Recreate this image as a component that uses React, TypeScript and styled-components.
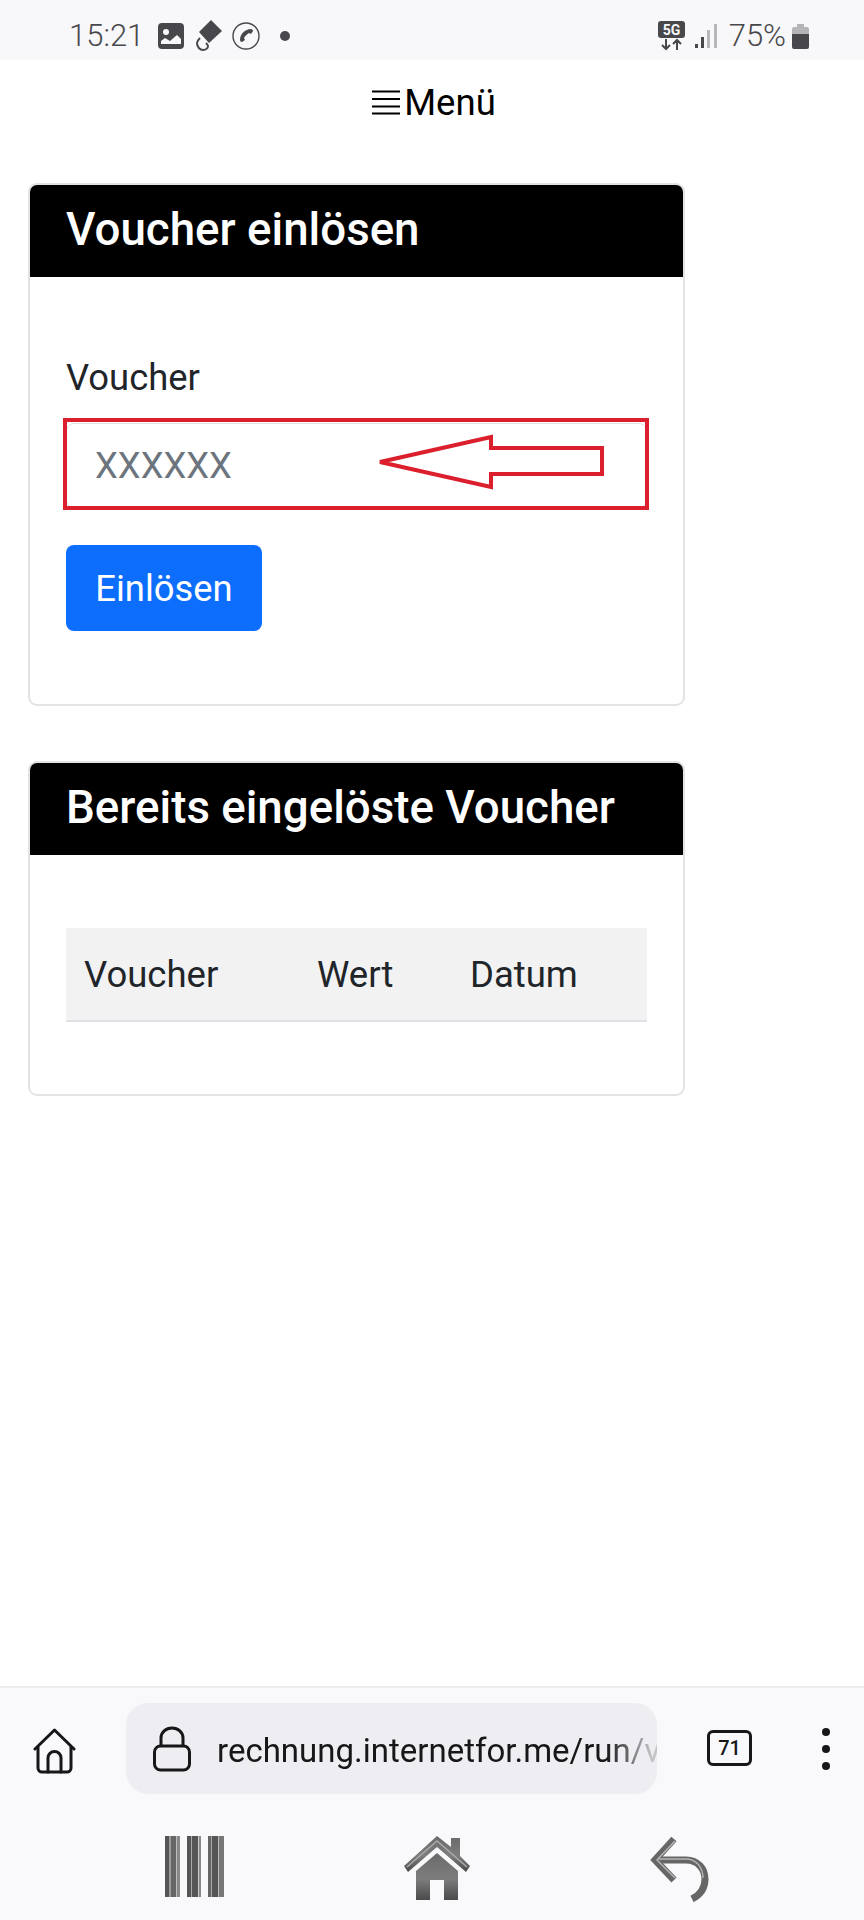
import React from 'react'
import styled, { createGlobalStyle } from 'styled-components'

const Global = createGlobalStyle`
  html, body { margin: 0; padding: 0; background: #fff; }
  body { font-family: Roboto, "Liberation Sans", sans-serif; color: #212529; }
  * { box-sizing: border-box; }
`

const Page = styled.div`
  width: 864px;
  height: 1920px;
  display: flex;
  flex-direction: column;
  overflow: hidden;
`

const StatusBar = styled.div`
  height: 60px;
  flex: none;
  background: #f8f8fa;
  display: flex;
  align-items: center;
  padding: 12px 55px 0 69px;
  color: #48484c;
`

const Time = styled.span`
  font-size: 31px;
  font-weight: 300;
  width: 89px;
  margin-top: -2px;
`

const StatusIcon = styled.svg<{ $gap?: number }>`
  display: block;
  flex: none;
  margin-right: ${(p) => p.$gap ?? 0}px;
`

const StatusSpacer = styled.div`
  flex: 1;
`

const Percent = styled.span`
  font-size: 31px;
  font-weight: 300;
  margin: -2px 6px 0 0;
`

const Main = styled.main`
  flex: 1;
  padding: 0 0 0 28px;
`

const MenuRow = styled.div`
  height: 123px;
  width: 816px;
  margin-left: -28px;
  padding: 0 0 39px 0;
  display: flex;
  align-items: center;
  justify-content: center;
  font-size: 36.500px;
  color: #000;
  position: relative;
  left: 26px;
`

const MenuLabel = styled.span`
  margin-left: 4px;
`

const Card = styled.section`
  width: 657px;
  border: 2px solid #e3e3e5;
  border-radius: 9px;
  overflow: hidden;
  margin-bottom: 55px;
  background: #fff;
`

const CardHeader = styled.h2`
  margin: -2px -2px 0;
  height: 94px;
  background: #000;
  color: #fff;
  font-size: 45.700px;
  font-weight: 500;
  line-height: 93px;
  padding-left: 38px;
`

const CardBody = styled.div<{ $pad: string }>`
  padding: ${(p) => p.$pad};
`

const Label = styled.label`
  display: block;
  font-size: 36.400px;
  line-height: 54px;
  margin-bottom: 18px;
`

const Field = styled.div`
  position: relative;
  width: 581px;
  height: 85px;
`

const Input = styled.input`
  width: 100%;
  height: 100%;
  border: 1px solid #dee2e6;
  border-radius: 8px;
  padding: 0 28px;
  font: 400 36.400px Roboto, sans-serif;
  &::placeholder { color: #6c757d; opacity: 1; }
`

const RedFrame = styled.div`
  position: absolute;
  left: -3px;
  top: -5px;
  width: 586px;
  height: 92px;
  border: 4px solid #dc1f2c;
  pointer-events: none;
`

const Arrow = styled.svg`
  position: absolute;
  left: 0;
  top: 0;
  pointer-events: none;
`

const Button = styled.button`
  display: block;
  margin-top: 37px;
  width: 196px;
  height: 86px;
  border: 0;
  border-radius: 8px;
  background: #0d6efd;
  color: #fff;
  font: 400 36.400px Roboto, sans-serif;
`

const Table = styled.table`
  width: 581px;
  border-collapse: collapse;
  table-layout: fixed;
`

const Th = styled.th<{ $w: number }>`
  width: ${(p) => p.$w}px;
  height: 93px;
  background: #f2f2f3;
  border-bottom: 2px solid #dee2e6;
  padding: 0 0 0 18px;
  text-align: left;
  font-size: 36.500px;
  font-weight: 400;
`

const Toolbar = styled.div`
  height: 124px;
  flex: none;
  background: #f9f9fb;
  border-top: 2px solid #ececee;
  padding: 15px 0 0 33px;
  display: flex;
  align-items: flex-start;
`

const HomeIcon = styled.svg`
  flex: none;
  margin-top: 25px;
`

const UrlPill = styled.div`
  width: 531px;
  height: 91px;
  margin: 0 50px;
  flex: none;
  background: #eeeef2;
  border-radius: 22px;
  display: flex;
  align-items: center;
  padding-left: 27px;
  gap: 26px;
  overflow: hidden;
`

const LockIcon = styled.svg`
  flex: none;
`

const UrlText = styled.span`
  flex: none;
  font-size: 33px;
  color: #17171a;
  white-space: nowrap;
  margin-top: 3px;
  -webkit-mask-image: linear-gradient(to right, #000 88%, rgba(0, 0, 0, 0.2) 98%);
  mask-image: linear-gradient(to right, #000 88%, rgba(0, 0, 0, 0.2) 98%);
`

const TabCount = styled.div`
  width: 45px;
  height: 36px;
  margin-top: 27px;
  border: 3px solid #17171a;
  border-radius: 6px;
  display: flex;
  align-items: center;
  justify-content: center;
  font-size: 20px;
  font-weight: 500;
  color: #17171a;
`

const Dots = styled.div`
  display: flex;
  flex-direction: column;
  gap: 9px;
  margin: 25px 0 0 70px;
`

const Dot = styled.span`
  width: 8px;
  height: 8px;
  border-radius: 50%;
  background: #17171a;
`

const NavBar = styled.div`
  height: 110px;
  flex: none;
  background: #f9f9fb;
  display: flex;
  align-items: flex-start;
  gap: 180px;
  padding: 26px 0 0 165px;
`

const bars: [number, number, string][] = [
  [0, 4, '#555'], [4, 2, '#999'], [6, 5, '#666'], [11, 1, '#bbb'], [12, 3, '#888'],
  [22, 4, '#555'], [26, 1, '#aaa'], [27, 6, '#555'], [33, 1, '#ccc'], [34, 2, '#888'],
  [43, 3, '#666'], [46, 1, '#aaa'], [47, 6, '#555'], [53, 1, '#bbb'], [54, 5, '#777'],
]

const Barcode = () => (
  <svg width="59" height="61" viewBox="0 0 59 61">
    {bars.map(([x, w, c]) => (
      <rect key={x} x={x} y="0" width={w} height="61" fill={c} />
    ))}
  </svg>
)

const NavHome = () => (
  <svg width="66" height="66" viewBox="0 0 66 66">
    <defs>
      <linearGradient id="homeFill" x1="0" y1="0" x2="0" y2="1">
        <stop offset="0" stopColor="#6a6a6a" />
        <stop offset="0.55" stopColor="#7d7d7d" />
        <stop offset="1" stopColor="#4a4a4a" />
      </linearGradient>
    </defs>
    <path d="M33 0 47 11V2h9v18l10 10-4 6L33 11 4 36l-4-6z" fill="url(#homeFill)" />
    <path d="M3 31 33 5 63 31" fill="none" stroke="#aaa" strokeWidth="1.500" />
    <path d="M33 17 54 35v29H40V44H26v20H12V35z" fill="url(#homeFill)" />
  </svg>
)

const NavBack = () => (
  <svg width="59" height="66" viewBox="0 0 59 66" fill="none">
    <path d="M24 3 5 24l19 20" stroke="#666" strokeWidth="7" />
    <path d="M6 24h30c12 0 19 9 19 19 0 9-5 16-13 20" stroke="#666" strokeWidth="7" />
    <path d="M25 5 7 24l18 18M9 23h27c10 0 17 8 17 19" stroke="#b5b5b5" strokeWidth="1.500" />
  </svg>
)

function App() {
  return (
    <Page>
      <Global />
      <StatusBar>
        <Time>15:21</Time>
        <StatusIcon $gap={11} width="26" height="26" viewBox="0 0 26 26">
          <rect width="26" height="26" rx="4" fill="#48484c" />
          <circle cx="8" cy="9" r="3" fill="#f8f8fa" />
          <path d="M3 21v-3l4-3 5 3 7-6 4 4v5z" fill="#f8f8fa" />
        </StatusIcon>
        <StatusIcon $gap={10} width="27" height="32" viewBox="0 0 27 32" fill="none">
          <path d="M16 0 27 11 14 23 4 12z" fill="#48484c" />
          <path d="M5 18c-2 2-3 3-3 5 0 4 3 7 6 7 3 0 5-2 5-4 0-1-1-2-2-3" stroke="#48484c" strokeWidth="2" />
        </StatusIcon>
        <StatusIcon $gap={20} width="28" height="28" viewBox="0 0 28 28" fill="none">
          <circle cx="14" cy="14" r="13" stroke="#48484c" strokeWidth="1.400" />
          <path d="M19 7c1 0 2 1 2 2l-2 3-2-1c-2 1-4 3-5 5l1 2-3 2c-1 0-2-1-2-2 0-6 5-11 11-11z" fill="#48484c" />
        </StatusIcon>
        <StatusIcon width="10" height="10" viewBox="0 0 10 10">
          <circle cx="5" cy="5" r="5" fill="#48484c" />
        </StatusIcon>
        <StatusSpacer />
        <StatusIcon $gap={10} width="27" height="30" viewBox="0 0 27 30">
          <rect width="27" height="17" rx="3" fill="#48484c" />
          <text x="13.500" y="14" textAnchor="middle" fontFamily="Roboto" fontWeight="700" fontSize="14" fill="#f8f8fa">5G</text>
          <path d="M8 18v10m-4-4 4 4 4-4M19 29V19m-4 4 4-4 4 4" stroke="#48484c" strokeWidth="2" fill="none" />
        </StatusIcon>
        <StatusIcon $gap={12} width="22" height="24" viewBox="0 0 22 24">
          <rect x="0" y="20" width="3" height="4" fill="#48484c" />
          <rect x="6" y="13" width="3" height="11" fill="#48484c" />
          <rect x="12" y="6" width="3" height="18" fill="#b8b8bc" />
          <rect x="19" y="0" width="3" height="24" fill="#b8b8bc" />
        </StatusIcon>
        <Percent>75%</Percent>
        <StatusIcon width="17" height="25" viewBox="0 0 17 25">
          <path d="M5 0h7v3h3a2 2 0 0 1 2 2v5H0V5a2 2 0 0 1 2-2h3z" fill="#b5b5b8" />
          <path d="M0 10h17v13a2 2 0 0 1-2 2H2a2 2 0 0 1-2-2z" fill="#48484c" />
        </StatusIcon>
      </StatusBar>

      <Main>
        <MenuRow>
          <svg width="28" height="25" viewBox="0 0 28 25">
            <path d="M0 1.500h28M0 9h28M0 16.500h28M0 23.500h28" stroke="#000" strokeWidth="2.200" />
          </svg>
          <MenuLabel>Menü</MenuLabel>
        </MenuRow>

        <Card>
          <CardHeader>Voucher einlösen</CardHeader>
          <CardBody $pad="74px 36px 73px">
            <Label>Voucher</Label>
            <Field>
              <Input placeholder="XXXXXX" />
              <RedFrame />
              <Arrow width="581" height="84" viewBox="0 0 581 84" fill="none">
                <path d="M314 39 425 14V25H536V51H425V64Z" stroke="#dc1f2c" strokeWidth="4" />
              </Arrow>
            </Field>
            <Button>Einlösen</Button>
          </CardBody>
        </Card>

        <Card>
          <CardHeader>Bereits eingelöste Voucher</CardHeader>
          <CardBody $pad="73px 36px 72px">
            <Table>
              <thead>
                <tr>
                  <Th $w={233}>Voucher</Th>
                  <Th $w={153}>Wert</Th>
                  <Th $w={195}>Datum</Th>
                </tr>
              </thead>
            </Table>
          </CardBody>
        </Card>
      </Main>

      <Toolbar>
        <HomeIcon width="43" height="46" viewBox="0 0 43 46" fill="none" stroke="#17171a" strokeWidth="3" strokeLinejoin="round" strokeLinecap="round">
          <path d="M2 21 21.500 2 41 21" />
          <path d="M5 19v21a4 4 0 0 0 4 4h25a4 4 0 0 0 4-4V19" />
          <path d="M15 44V30a6.500 6.500 0 0 1 13 0v14" />
        </HomeIcon>
        <UrlPill>
          <LockIcon width="38" height="46" viewBox="0 0 38 46" fill="none" stroke="#17171a" strokeWidth="3">
            <rect x="1.500" y="20" width="35" height="24" rx="6" />
            <path d="M8 20v-8a11 10 0 0 1 22 0v8" />
          </LockIcon>
          <UrlText>rechnung.internetfor.me/run/v</UrlText>
        </UrlPill>
        <TabCount>71</TabCount>
        <Dots>
          <Dot />
          <Dot />
          <Dot />
        </Dots>
      </Toolbar>

      <NavBar>
        <Barcode />
        <NavHome />
        <NavBack />
      </NavBar>
    </Page>
  )
}

export default App
